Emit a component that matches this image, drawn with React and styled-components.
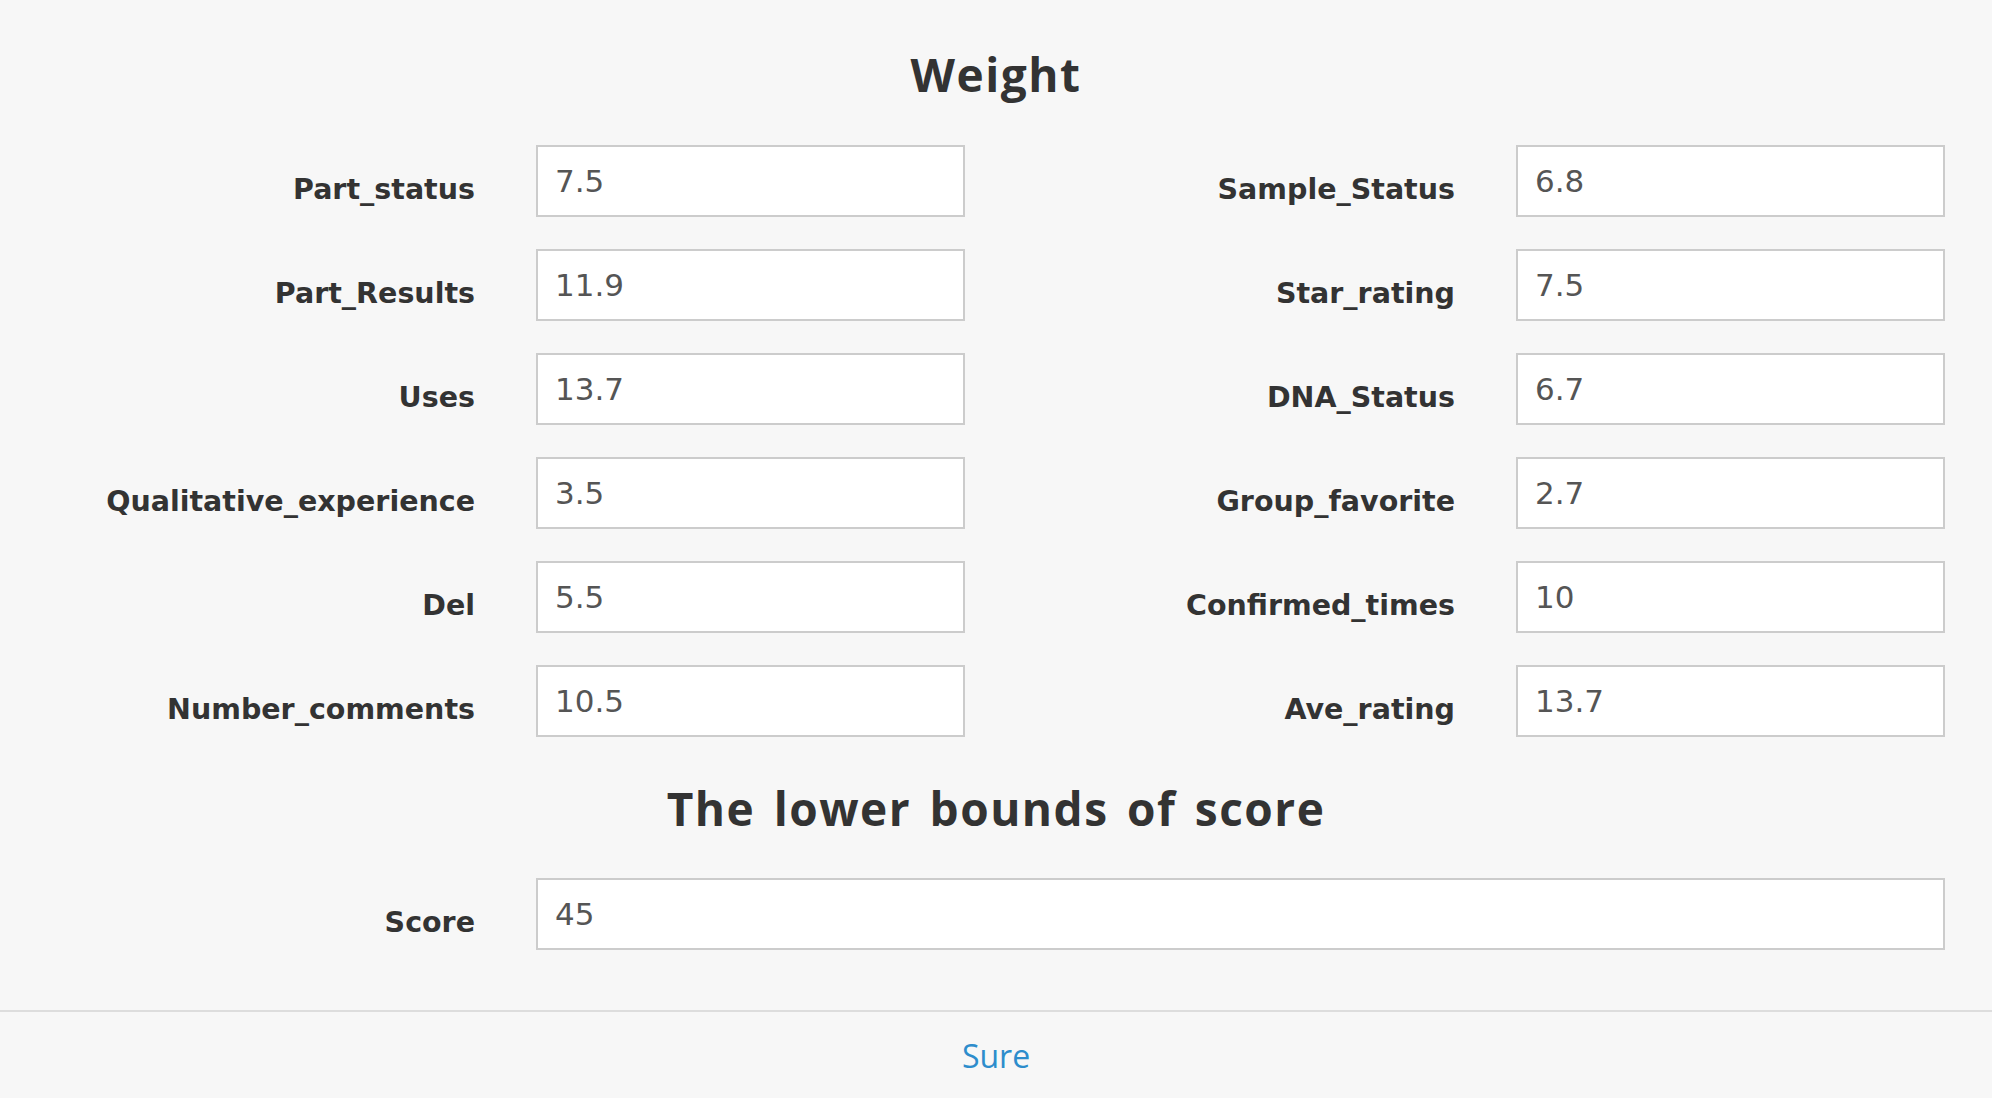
import React from 'react';
import styled, { createGlobalStyle } from 'styled-components';

const Global = createGlobalStyle`
  html, body {
    margin: 0;
    padding: 0;
    background: #f7f7f7;
  }
  body {
    font-family: "Open Sans", "Noto Sans", sans-serif;
  }
  * { box-sizing: border-box; }
`;

const Page = styled.div`
  min-height: 1098px;
  display: flex;
  flex-direction: column;
  background: #f7f7f7;
`;

const Body = styled.div`
  display: flex;
  flex-direction: column;
  padding: 45px 0 60px 0;
`;

const Title = styled.h2`
  margin: ${(p) => (p.$first ? '0 0 42px' : '42px 0 41px')};
  text-align: center;
  font-family: "Open Sans", "Noto Sans", sans-serif;
  font-size: 46px;
  letter-spacing: 1.5px;
  word-spacing: 5px;
  line-height: 58px;
  font-weight: 700;
  color: #333;
`;

const FieldGrid = styled.div`
  display: grid;
  grid-template-columns: 965px 965px;
  column-gap: 15px;
  row-gap: 32px;
  padding-right: 47px;
`;

const Field = styled.div`
  display: grid;
  grid-template-columns: 475px 1fr;
  column-gap: 61px;
  align-items: start;
  padding-right: ${(p) => (p.$wide ? '47px' : '0')};
`;

const Label = styled.label`
  text-align: right;
  font-family: "DejaVu Sans", "Open Sans", sans-serif;
  font-size: 28.5px;
  font-weight: 700;
  line-height: 38px;
  padding-top: 26px;
  color: #333;
  white-space: nowrap;
`;

const Input = styled.input`
  display: block;
  width: 100%;
  height: 72px;
  margin: 0;
  padding: 0 17px;
  border: 2px solid #cccccc;
  border-radius: 0;
  background: #fff;
  font-family: "DejaVu Sans", "Open Sans", sans-serif;
  font-size: 31px;
  color: #555;
  outline: none;
`;

const Footer = styled.div`
  flex: 1;
  min-height: 86px;
  border-top: 2px solid #dddddd;
  display: flex;
  align-items: center;
  justify-content: center;
`;

const SureButton = styled.button`
  border: none;
  background: none;
  padding: 0;
  font-family: "Open Sans", "Noto Sans", sans-serif;
  font-size: 32px;
  color: #2d8dcc;
  cursor: pointer;
`;

const weights = [
  ['Part_status', '7.5', 'Sample_Status', '6.8'],
  ['Part_Results', '11.9', 'Star_rating', '7.5'],
  ['Uses', '13.7', 'DNA_Status', '6.7'],
  ['Qualitative_experience', '3.5', 'Group_favorite', '2.7'],
  ['Del', '5.5', 'Confirmed_times', '10'],
  ['Number_comments', '10.5', 'Ave_rating', '13.7'],
];

function FormField({ name, value, wide }) {
  return (
    <Field $wide={wide}>
      <Label htmlFor={name}>{name}</Label>
      <Input id={name} defaultValue={value} />
    </Field>
  );
}

export default function App() {
  return (
    <>
      <Global />
      <Page>
        <Body>
          <Title $first>Weight</Title>
          <FieldGrid>
            {weights.map(([a, av, b, bv]) => (
              <React.Fragment key={a}>
                <FormField name={a} value={av} />
                <FormField name={b} value={bv} />
              </React.Fragment>
            ))}
          </FieldGrid>
          <Title>The lower bounds of score</Title>
          <FormField name="Score" value="45" wide />
        </Body>
        <Footer>
          <SureButton type="button">Sure</SureButton>
        </Footer>
      </Page>
    </>
  );
}
